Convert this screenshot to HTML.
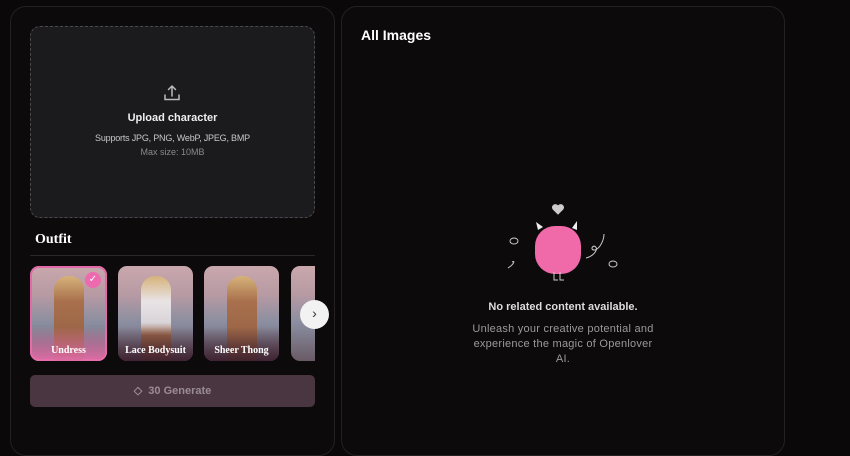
<!DOCTYPE html>
<html><head><style>
*{margin:0;padding:0;box-sizing:border-box}
body{width:850px;height:445px;background:#0a0809;font-family:"Liberation Sans",sans-serif;position:relative;overflow:hidden;color:#fff}
.panel{position:absolute;border:1px solid #232124;border-radius:16px;background:#0c0a0b}
.up{position:absolute;left:30px;top:26px;width:285px;height:192px;background:#1b1a1c;border:1px dashed #4a4a4e;border-radius:10px;text-align:center}
.card{position:absolute;top:266px;height:95px;border-radius:9px;overflow:hidden;background:linear-gradient(180deg,#c9a8ad 0%,#b79aa3 30%,#8a8ea0 60%,#6a5a66 100%)}
.card .body{position:absolute;left:50%;top:10px;width:30px;margin-left:-15px;height:85px;border-radius:14px 14px 4px 4px;background:linear-gradient(180deg,#d6b27a 0%,#a8704c 30%,#9a6446 70%,#7a4e3c 100%)}
.card .lab{position:absolute;left:0;right:0;bottom:0;height:34px;background:linear-gradient(180deg,rgba(60,30,40,0),rgba(60,30,45,.9));font-family:"Liberation Serif",serif;font-weight:bold;font-size:10px;text-align:center;padding-top:18px}
</style></head><body>
<div class="panel" style="left:10px;top:6px;width:325px;height:450px"></div>
<div class="panel" style="left:341px;top:6px;width:444px;height:450px"></div>
<div class="up">
<svg style="position:absolute;left:132px;top:57px" width="18" height="18" viewBox="0 0 18 18" fill="none" stroke="#bbb" stroke-width="1.5" stroke-linecap="round"><path d="M9 12V2M5.5 5.5L9 2l3.5 3.5M2 11v4.5h14V11"/></svg>
<div style="position:absolute;left:0;right:0;top:85px;font-size:11px;font-weight:bold;color:#eee">Upload character</div>
<div style="position:absolute;left:0;right:0;top:106px;font-size:9px;letter-spacing:-0.2px;color:#c8c8c8">Supports JPG, PNG, WebP, JPEG, BMP</div>
<div style="position:absolute;left:0;right:0;top:120px;font-size:9px;color:#8a8a8a">Max size: 10MB</div>
</div>
<div style="position:absolute;left:35px;top:232px;font-family:'Liberation Serif',serif;font-weight:bold;font-size:14px">Outfit</div>
<div style="position:absolute;left:30px;top:255px;width:285px;height:1px;background:#2a282b"></div>
<div class="card" style="left:30px;width:77px;box-shadow:inset 0 0 0 2px #e36aa8"><div class="body"></div><div class="lab" style="background:linear-gradient(180deg,rgba(230,110,170,0),rgba(230,110,170,.95))">Undress</div>
<div style="position:absolute;right:6px;top:6px;width:16px;height:16px;border-radius:50%;background:#ee6aae;color:#fff;font-size:10px;text-align:center;line-height:16px">✓</div></div>
<div class="card" style="left:118px;width:75px"><div class="body" style="background:linear-gradient(180deg,#d6b27a 0%,#e8e4e6 30%,#d8d4d8 55%,#9a6446 70%,#7a4e3c 100%)"></div><div class="lab">Lace Bodysuit</div></div>
<div class="card" style="left:204px;width:75px"><div class="body"></div><div class="lab">Sheer Thong</div></div>
<div class="card" style="left:291px;width:24px;border-radius:9px 0 0 9px"></div>
<div style="position:absolute;left:300px;top:300px;width:29px;height:29px;border-radius:50%;background:#f2f2f2;color:#333;font-size:14px;text-align:center;line-height:27px">›</div>
<div style="position:absolute;left:30px;top:375px;width:285px;height:32px;background:#4a3640;border-radius:5px;text-align:center;line-height:32px;font-size:11px;font-weight:bold;color:#9a8c92">◇&nbsp; 30 Generate</div>
<div style="position:absolute;left:361px;top:27px;font-size:14px;font-weight:bold">All Images</div>
<svg style="position:absolute;left:500px;top:200px" width="120" height="90" viewBox="0 0 120 90" fill="none" stroke="#ccc" stroke-width="1">
<path d="M58 6c-3-3-7 0-5 3l5 5 5-5c2-3-2-6-5-3z" fill="#ccc"/>
<rect x="35" y="26" width="46" height="48" rx="20" fill="#f06aaa" stroke="none"/>
<path d="M38 30l-2-8 7 5z" fill="#eee" stroke="none"/><path d="M72 28l5-7 0 9z" fill="#eee" stroke="none"/>
<path d="M54 72v8h4M60 72v8h4"/>
<ellipse cx="14" cy="41" rx="4" ry="3"/><path d="M8 68c5-3 8-8 4-6"/>
<path d="M86 58c8-2 14-10 8-12-5 2 0 8 6 0 4-6 4-10 4-12"/><ellipse cx="113" cy="64" rx="4" ry="3"/>
</svg>
<div style="position:absolute;left:441px;top:301px;width:244px;text-align:center;font-size:11px;font-weight:bold;color:#ddd">No related content available.</div>
<div style="position:absolute;left:470px;top:322px;width:186px;text-align:center;font-size:11px;letter-spacing:0.25px;line-height:15px;color:#9a9a9a">Unleash your creative potential and experience the magic of Openlover AI.</div>
</body></html>
